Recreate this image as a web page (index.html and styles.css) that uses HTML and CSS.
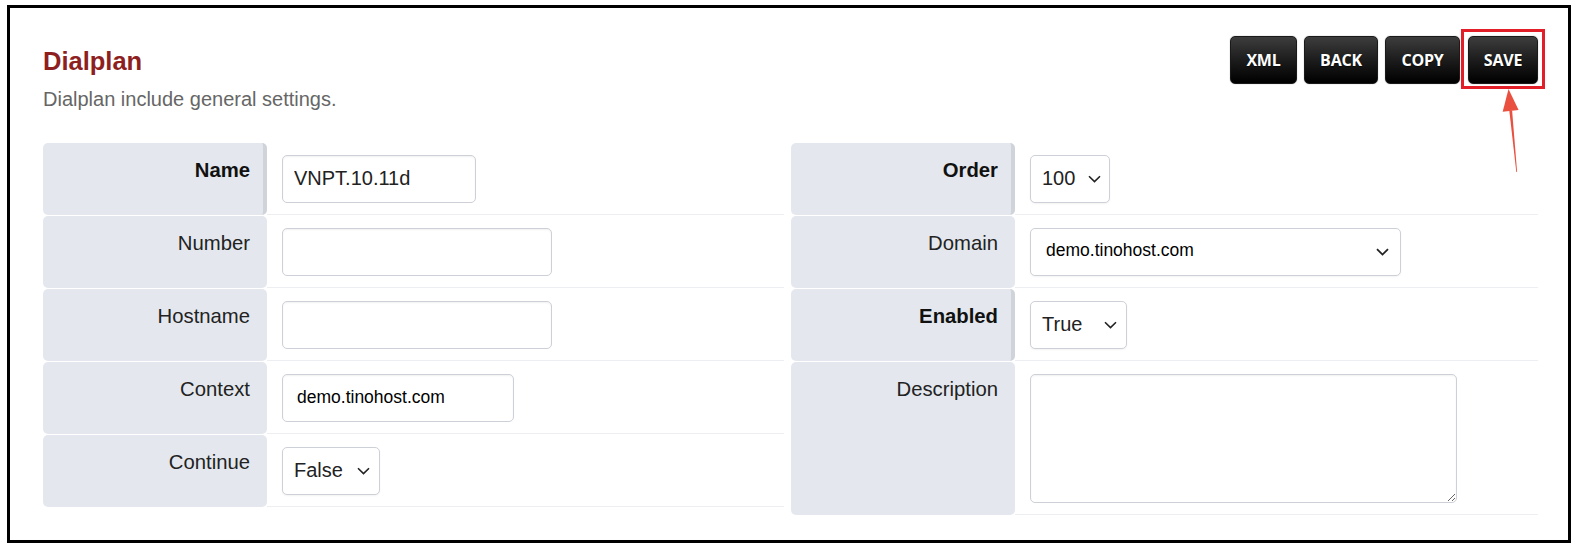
FILE: index.html
```html
<!DOCTYPE html>
<html lang="en">
<head>
<meta charset="utf-8">
<title>Dialplan</title>
<link rel="stylesheet" href="styles.css">
</head>
<body>
<div class="frame">
  <div class="header">
    <div class="heading">
      <h1 class="title">Dialplan</h1>
      <p class="subtitle">Dialplan include general settings.</p>
    </div>
    <div class="actions">
      <button class="btn btn-xml">XML</button>
      <button class="btn btn-back">BACK</button>
      <button class="btn btn-copy">COPY</button>
      <button class="btn btn-save">SAVE</button>
    </div>
  </div>

  <div class="columns">
    <div class="col col-left">
      <div class="row">
        <div class="label required">Name</div>
        <div class="field"><input class="input w-name" type="text" value="VNPT.10.11d"></div>
      </div>
      <div class="row">
        <div class="label">Number</div>
        <div class="field"><input class="input w-wide" type="text" value=""></div>
      </div>
      <div class="row">
        <div class="label">Hostname</div>
        <div class="field"><input class="input w-wide" type="text" value=""></div>
      </div>
      <div class="row">
        <div class="label">Context</div>
        <div class="field"><input class="input input-small w-context" type="text" value="demo.tinohost.com"></div>
      </div>
      <div class="row">
        <div class="label">Continue</div>
        <div class="field">
          <div class="select w-false"><span>False</span>
            <svg class="chev" width="13" height="8" viewBox="0 0 13 8"><path d="M1 1.2 L6.5 6.6 L12 1.2" fill="none" stroke="#222" stroke-width="1.6"/></svg>
          </div>
        </div>
      </div>
    </div>

    <div class="col col-right">
      <div class="row">
        <div class="label required">Order</div>
        <div class="field">
          <div class="select w-order"><span>100</span>
            <svg class="chev" width="13" height="8" viewBox="0 0 13 8"><path d="M1 1.2 L6.5 6.6 L12 1.2" fill="none" stroke="#222" stroke-width="1.6"/></svg>
          </div>
        </div>
      </div>
      <div class="row">
        <div class="label">Domain</div>
        <div class="field">
          <div class="select select-small w-domain"><span>demo.tinohost.com</span>
            <svg class="chev" width="13" height="8" viewBox="0 0 13 8"><path d="M1 1.2 L6.5 6.6 L12 1.2" fill="none" stroke="#222" stroke-width="1.8"/></svg>
          </div>
        </div>
      </div>
      <div class="row">
        <div class="label required">Enabled</div>
        <div class="field">
          <div class="select w-true"><span>True</span>
            <svg class="chev" width="13" height="8" viewBox="0 0 13 8"><path d="M1 1.2 L6.5 6.6 L12 1.2" fill="none" stroke="#222" stroke-width="1.6"/></svg>
          </div>
        </div>
      </div>
      <div class="row row-tall">
        <div class="label">Description</div>
        <div class="field"><textarea class="textarea"></textarea></div>
      </div>
    </div>
  </div>

  <div class="highlight"></div>
  <svg class="arrow" width="40" height="95" viewBox="0 0 40 95">
    <polygon points="18.5,4 12.7,26.7 28.6,25.1" fill="#e9503f"/>
    <polygon points="19.3,25.5 22.1,25.4 27.1,87 26.3,87" fill="#e9503f"/>
  </svg>
</div>
</body>
</html>
```

FILE: styles.css
```css
* { box-sizing: border-box; }

html, body {
  margin: 0;
  padding: 0;
  background: #ffffff;
}

body {
  font-family: "Liberation Sans", Arial, sans-serif;
  color: #222;
}

.frame {
  position: relative;
  margin: 5px 0 0 7px;
  width: 1564px;
  height: 538px;
  border: 3px solid #000;
  padding: 28px 30px 0 33px;
  background: #fff;
}

.header {
  display: flex;
  justify-content: space-between;
  align-items: flex-start;
}

.heading {
  padding-top: 11px;
}

.title {
  margin: 0;
  font-size: 25.5px;
  line-height: 28px;
  font-weight: bold;
  color: #8e1f1f;
}

.subtitle {
  margin: 12px 0 0 0;
  font-size: 20px;
  line-height: 24px;
  color: #666;
}

.actions {
  display: flex;
  gap: 7px;
}

.btn {
  height: 48px;
  padding: 0;
  border: 1px solid #1a1a1a;
  border-radius: 5px;
  background: linear-gradient(to bottom, #3d3d3d 0%, #1c1c1c 50%, #000 100%);
  color: #fff;
  font-family: "Open Sans", "Liberation Sans", sans-serif;
  font-weight: bold;
  font-size: 16px;
  letter-spacing: -0.2px;
  text-shadow: 0 1px 1px rgba(0,0,0,0.6);
  box-shadow: 0 0 1px rgba(0,0,0,0.5);
}

.btn-xml { width: 67px; }
.btn-back { width: 74px; }
.btn-copy { width: 75px; }
.btn-save { width: 70px; margin-left: 1px; }

.columns {
  margin-top: 32px;
  display: grid;
  grid-template-columns: 741px 1fr;
  column-gap: 7px;
  align-items: start;
}

.col {
  display: flex;
  flex-direction: column;
  gap: 1.5px;
}

.row {
  display: grid;
  grid-template-columns: 224px 1fr;
  height: 71.5px;
}

.row-tall {
  height: 153px;
}

.label {
  background: #e4e8ee;
  border-radius: 5px;
  text-align: right;
  padding: 15px 17px 0 0;
  font-size: 20.3px;
  line-height: 24px;
  color: #222;
}

.label.required {
  font-weight: bold;
  color: #111;
  border-right: 4px solid #cfd3da;
  padding-right: 13px;
}

.field {
  border-bottom: 1px solid #eceef2;
  padding: 11.5px 0 0 15px;
}

.input {
  display: block;
  height: 48px;
  border: 1px solid #cdd0d7;
  border-radius: 5px;
  background: #fff;
  box-shadow: inset 0 1px 2px rgba(0,0,0,0.06);
  padding: 0 11px;
  font-family: "Liberation Sans", Arial, sans-serif;
  font-size: 20px;
  color: #222;
  outline: none;
}

.input-small {
  font-size: 17.5px;
  padding-left: 14px;
  color: #000;
}

.w-name { width: 194px; }
.w-wide { width: 270px; }
.w-context { width: 232px; }

.select {
  display: flex;
  align-items: center;
  justify-content: space-between;
  height: 48px;
  border: 1px solid #cdd0d7;
  border-radius: 5px;
  background: #fff;
  box-shadow: 0 1px 2px rgba(0,0,0,0.05);
  padding: 0 9px 0 11px;
  font-size: 20px;
  color: #222;
}

.select-small {
  font-size: 17.5px;
  color: #000;
  padding: 0 11px 0 15px;
}

.select-small span {
  margin-top: -3px;
}

.chev {
  display: block;
  flex: none;
}

.w-false { width: 98px; }
.w-order { width: 80px; padding-right: 8px; }
.w-domain { width: 371px; }
.w-true { width: 97px; }

.textarea {
  display: block;
  width: 427px;
  height: 129px;
  border: 1px solid #cdd0d7;
  border-radius: 5px;
  box-shadow: inset 0 1px 2px rgba(0,0,0,0.06);
  background: #fff;
  font-family: "Liberation Sans", Arial, sans-serif;
  font-size: 18px;
  outline: none;
}

.highlight {
  position: absolute;
  left: 1451px;
  top: 21px;
  width: 84px;
  height: 60px;
  border: 3px solid #e21f28;
}

.arrow {
  position: absolute;
  left: 1480px;
  top: 77px;
}
```
